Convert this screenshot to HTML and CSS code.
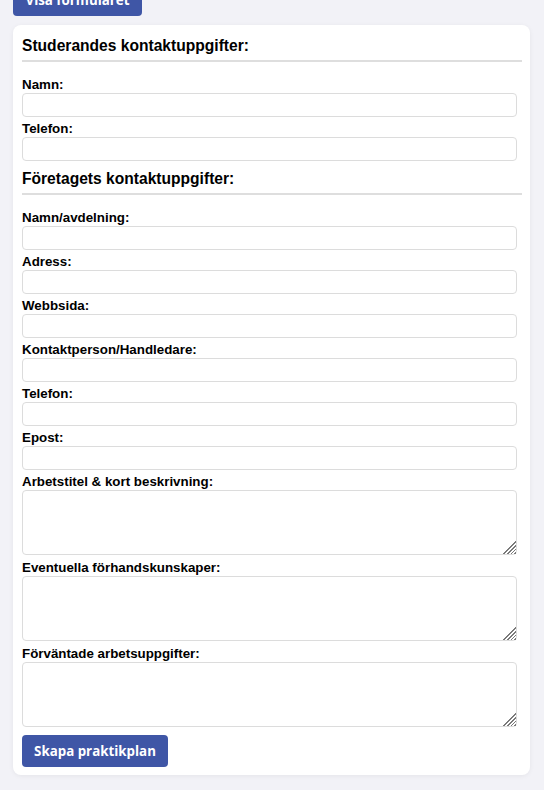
FILE: index.html
```html
<!DOCTYPE html>
<html lang="sv">
<head>
<meta charset="utf-8">
<title>Praktikplan</title>
<link rel="stylesheet" href="styles.css">
</head>
<body>
<div class="page">
  <button class="btn btn-top" type="button">Visa formuläret</button>
  <form class="card">
    <h3 class="section-title">Studerandes kontaktuppgifter:</h3>
    <label class="lbl">Namn:</label>
    <input class="field" type="text">
    <label class="lbl">Telefon:</label>
    <input class="field" type="text">

    <h3 class="section-title second">Företagets kontaktuppgifter:</h3>
    <label class="lbl">Namn/avdelning:</label>
    <input class="field" type="text">
    <label class="lbl">Adress:</label>
    <input class="field" type="text">
    <label class="lbl">Webbsida:</label>
    <input class="field" type="text">
    <label class="lbl">Kontaktperson/Handledare:</label>
    <input class="field" type="text">
    <label class="lbl">Telefon:</label>
    <input class="field" type="text">
    <label class="lbl">Epost:</label>
    <input class="field" type="text">
    <label class="lbl">Arbetstitel &amp; kort beskrivning:</label>
    <textarea class="area"></textarea>
    <label class="lbl">Eventuella förhandskunskaper:</label>
    <textarea class="area"></textarea>
    <label class="lbl">Förväntade arbetsuppgifter:</label>
    <textarea class="area"></textarea>
    <button class="btn btn-submit" type="button">Skapa praktikplan</button>
  </form>
</div>
</body>
</html>
```

FILE: styles.css
```css
html, body {
  margin: 0;
  padding: 0;
  background: #f2f2f7;
}
body {
  font-family: "Liberation Sans", Arial, sans-serif;
  color: #000;
  overflow: hidden;
}
.page {
  margin-top: -16px;
  padding: 0 14px 16px 13px;
  display: flex;
  flex-direction: column;
  align-items: flex-start;
}
.btn {
  display: block;
  height: 32px;
  border: none;
  border-radius: 4px;
  background: #3f56a6;
  color: #fff;
  font-family: "Open Sans", "Noto Sans", sans-serif;
  font-weight: 700;
  font-size: 13.33px;
  padding: 0 10px;
  cursor: pointer;
}
.btn-top {
  width: 129px;
  margin-bottom: 9px;
}
.card {
  align-self: stretch;
  background: #fff;
  border-radius: 8px;
  box-shadow: 0 1px 5px rgba(0, 0, 0, 0.06);
  padding: 11px 8px 8px 9px;
}
.section-title {
  margin: 0 0 15px 0;
  font-size: 15.6px;
  line-height: 20px;
  font-weight: 700;
  padding-bottom: 4px;
  border-bottom: 2px solid #dedede;
}
.section-title.second {
  margin-top: 8px;
}
.lbl {
  display: block;
  font-size: 13.33px;
  line-height: 16px;
  font-weight: 700;
}
.field, .area {
  display: block;
  box-sizing: border-box;
  width: 99%;
  border: 1px solid #dcdcdc;
  border-radius: 4px;
  background: #fff;
  margin: 0 0 4px 0;
  font-family: inherit;
  font-size: 13px;
  padding: 2px 6px;
  outline: none;
}
.field {
  height: 24px;
}
.area {
  height: 65px;
  margin-bottom: 5px;
  resize: vertical;
}
.area::-webkit-resizer {
  background:
    linear-gradient(135deg, #fff 0 52%, transparent 52%),
    repeating-linear-gradient(135deg, #fff 0 1.4px, #7a7a7a 1.4px 2.6px);
}
.btn-submit {
  margin-top: 8px;
  width: 146px;
}
```
